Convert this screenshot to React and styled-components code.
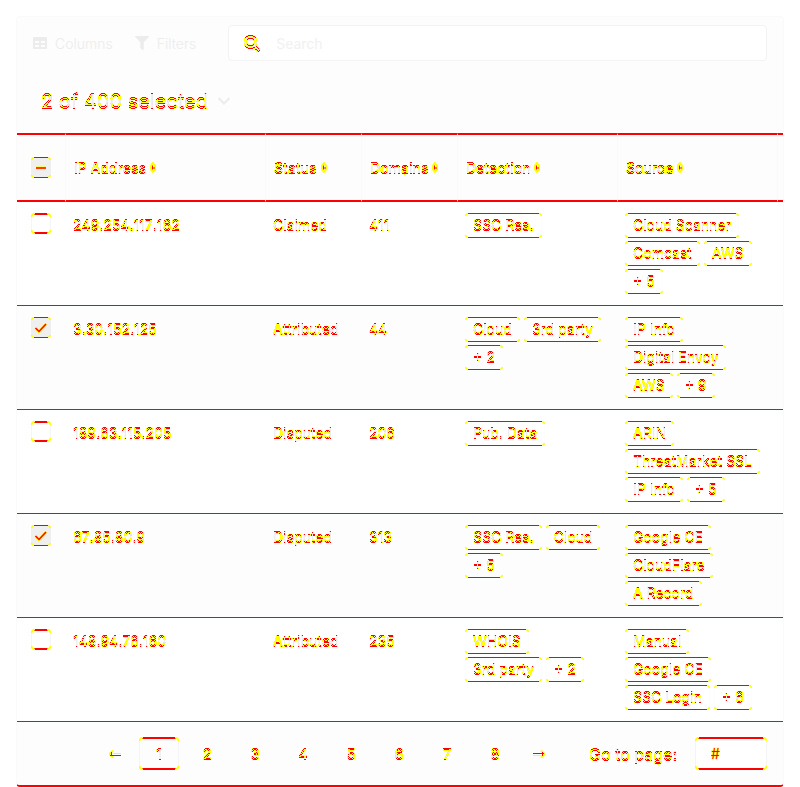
import React, { useState } from "react";
import styled, { createGlobalStyle, css } from "styled-components";
import { FaSearch, FaFilter } from "react-icons/fa";

const RED = "#ff0000";
const YELLOW = "#ffff00";
const FAINT = "#ececec";
const PALE = "#fdfdfd";
const HAIR = "#fafafa";

const GlobalStyle = createGlobalStyle`
  * { box-sizing: border-box; }
  body {
    margin: 0;
    background: #ffffff;
    color: ${RED};
    font-family: Inter, "Liberation Sans", sans-serif;
    font-size: 14px;
  }
  button, input { font: inherit; color: inherit; }
  button { background: none; border: 0; padding: 0; cursor: pointer; }
`;

/* Rounded frame: red rules above and below, yellow corners, faint sides. */
const arc = (at, pos, r) =>
  `radial-gradient(circle at ${at}, transparent ${r - 2}px, ${YELLOW} ${r - 1}px, ${YELLOW} ${r}px, transparent ${r + 1}px) ${pos} / ${r}px ${r}px no-repeat`;

const frame = ({ line = 1, side = PALE, fill = "transparent" }) => css`
  border: 0;
  border-radius: 3px;
  background:
    ${arc("100% 100%", "left top", line + 2)},
    ${arc("0% 100%", "right top", line + 2)},
    ${arc("100% 0%", "left bottom", line + 2)},
    ${arc("0% 0%", "right bottom", line + 2)},
    linear-gradient(${RED}, ${RED}) center top / calc(100% - 6px) ${line}px no-repeat,
    linear-gradient(${RED}, ${RED}) center bottom / calc(100% - 6px) ${line}px no-repeat,
    linear-gradient(${side}, ${side}) left center / 1px calc(100% - 6px) no-repeat,
    linear-gradient(${side}, ${side}) right center / 1px calc(100% - 6px) no-repeat,
    ${fill};
`;

const Defs = styled.svg`
  position: absolute;
  width: 0;
  height: 0;
`;

const Ink = styled.span`
  filter: url(#ink);
  display: inline-block;
`;

const Card = styled.main`
  margin: 16px 16px 0;
  background: ${PALE};
  border: 1px solid ${HAIR};
  border-bottom: 2px solid ${RED};
  border-radius: 4px;
`;

const Toolbar = styled.header`
  display: flex;
  align-items: center;
  gap: 22px;
  padding: 8px 16px 0;
`;

const ToolButton = styled.button`
  display: flex;
  align-items: center;
  gap: 8px;
  color: ${FAINT};
  font-weight: 300;
`;

const SearchBox = styled.label`
  flex: 1;
  display: flex;
  align-items: center;
  gap: 16px;
  height: 36px;
  margin-left: 10px;
  padding: 0 15px;
  background: #ffffff;
  border: 1px solid #f3f3f3;
  border-radius: 4px;
  svg { filter: url(#ink); flex: none; }
`;

const SearchInput = styled.input`
  flex: 1;
  min-width: 0;
  padding: 0;
  border: 0;
  outline: 0;
  background: none;
  &::placeholder { color: #f1f1f1; opacity: 1; }
`;

const Selection = styled.button`
  display: flex;
  align-items: center;
  gap: 9px;
  margin: 24px 0 16px 24px;
  font-size: 20px;
  line-height: 32px;
`;

const Table = styled.table`
  width: 100%;
  table-layout: fixed;
  border-collapse: separate;
  border-spacing: 0;
`;

const Col = styled.col`
  width: ${(p) => p.$w || "auto"};
`;

const HeadCell = styled.th`
  height: 69px;
  padding: 0 0 0 ${(p) => (p.$first ? 14 : 8)}px;
  text-align: left;
  border-top: 2px solid ${RED};
  border-bottom: 2px solid ${RED};
  border-left: ${(p) => (p.$first ? 0 : 1)}px solid #fafafa;
`;

const SortButton = styled.button`
  display: flex;
  align-items: center;
  gap: 4px;
  font-weight: 500;
`;

const Row = styled.tr`
  background: ${(p) => (p.$on ? PALE : "#ffffff")};
`;

const Cell = styled.td`
  padding: ${(p) => (p.$first ? "11px 0 0 14px" : "11px 8px")};
  vertical-align: top;
  line-height: 23px;
  font-kerning: ${(p) => (p.$plain ? "none" : "auto")};
  border-bottom: 1px solid ${RED};
`;

const Check = styled.span`
  display: grid;
  place-items: center;
  width: 20px;
  height: 21px;
  ${(p) => frame(p.$on ? { fill: "#efefef", side: "#efefef" } : { line: 2, fill: "#ffffff", side: "#f5f5f5" })}
  input {
    grid-area: 1 / 1;
    appearance: none;
    width: 20px;
    height: 20px;
    margin: 0;
  }
  svg { grid-area: 1 / 1; pointer-events: none; }
`;

const Chips = styled.div`
  display: flex;
  flex-wrap: wrap;
  gap: 3px 4px;
`;

const Chip = styled.span`
  padding: 0 8px;
  height: 25px;
  white-space: nowrap;
  ${frame({})}
`;

const Footer = styled.footer`
  display: flex;
  align-items: center;
  justify-content: flex-end;
  gap: 34px;
  padding: 15px 16px;
  font-size: 16px;
`;

const Pages = styled.nav`
  display: flex;
  gap: 8px;
`;

const PageButton = styled.button`
  display: grid;
  place-items: center;
  width: ${(p) => (p.$arrow ? 32 : 40)}px;
  height: 33px;
  font-size: 15px;
  ${(p) => p.$current && frame({ line: 2, side: "#f4f4f4" })}
`;

const GoTo = styled.label`
  display: flex;
  align-items: center;
  gap: 18px;
`;

const GoInput = styled.input`
  width: 72px;
  height: 33px;
  padding: 0 16px;
  outline: 0;
  font-size: 14px;
  ${frame({ line: 2, side: "#f4f4f4", fill: "#ffffff" })}
  &::placeholder { color: ${RED}; opacity: 1; -webkit-text-stroke: 1px ${YELLOW}; paint-order: stroke fill; }
`;

function InkFilter() {
  return (
    <Defs aria-hidden="true">
      <filter id="ink" x="-5%" y="-20%" width="110%" height="140%" colorInterpolationFilters="sRGB">
        <feOffset in="SourceAlpha" dy="1" result="down" />
        <feComposite in="SourceAlpha" in2="down" operator="arithmetic" k2="1" k3="-1" result="upper" />
        <feComposite in="down" in2="SourceAlpha" operator="arithmetic" k2="1" k3="-1" result="lower" />
        <feMerge result="edges">
          <feMergeNode in="upper" />
          <feMergeNode in="lower" />
        </feMerge>
        <feComponentTransfer in="edges" result="weak">
          <feFuncA type="discrete" tableValues="0 1 1 1 1 1 1 1 1 1" />
        </feComponentTransfer>
        <feComponentTransfer in="edges" result="strong">
          <feFuncA type="discrete" tableValues="0 0 0 0 0 1 1 1 1 1" />
        </feComponentTransfer>
        <feFlood floodColor="#ececec" />
        <feComposite in2="SourceAlpha" operator="in" result="gray" />
        <feFlood floodColor={YELLOW} />
        <feComposite in2="weak" operator="in" result="yellow" />
        <feFlood floodColor={RED} />
        <feComposite in2="strong" operator="in" result="red" />
        <feMerge>
          <feMergeNode in="gray" />
          <feMergeNode in="yellow" />
          <feMergeNode in="red" />
        </feMerge>
      </filter>
    </Defs>
  );
}

const ColumnsIcon = () => (
  <svg width="14" height="12" viewBox="0 0 14 12" fill="currentColor" aria-hidden="true">
    <path fillRule="evenodd" d="M1 0h12a1 1 0 0 1 1 1v10a1 1 0 0 1-1 1H1a1 1 0 0 1-1-1V1a1 1 0 0 1 1-1zM2 4v2h4V4zM8 4v2h4V4zM2 8v2h4V8zM8 8v2h4V8z" />
  </svg>
);

const Chevron = () => (
  <svg width="14" height="10" viewBox="0 0 14 10" fill="none" stroke={FAINT} strokeWidth="2" aria-hidden="true">
    <path d="M1.5 2 7 7.500 12.500 2" />
  </svg>
);

const SortIcon = () => (
  <svg width="6" height="11" viewBox="0 0 6 11" aria-hidden="true">
    <path d="M3 1 5 3.500v4L3 10 1 7.500v-4z" fill="#fff" stroke={YELLOW} strokeWidth="2" />
    <path d="M2 3.500v4h1v-1h2v-1H3v-2z" fill={RED} />
  </svg>
);

const Mark = ({ d }) => (
  <svg width="14" height="12" viewBox="0 0 14 12" fill="none" aria-hidden="true">
    <path d={d} stroke={YELLOW} strokeWidth="3" />
    <path d={d} stroke={RED} strokeWidth="1.500" />
  </svg>
);

const Arrow = ({ right }) => (
  <svg width="12" height="8" viewBox="0 0 12 8" fill="none" aria-hidden="true">
    {right ? (
      <>
        <path d="M8 .5 11.500 4 8 7.500" stroke={YELLOW} strokeWidth="2" />
        <path d="M0 5.500h8" stroke={YELLOW} />
        <path d="M0 3.500h11M9.500 2v4" stroke={RED} />
      </>
    ) : (
      <>
        <path d="M4 .5.5 4 4 7.500" stroke={YELLOW} strokeWidth="2" />
        <path d="M4 3.500h8" stroke={YELLOW} />
        <path d="M1 5.500h11M2.500 2v4" stroke={RED} />
      </>
    )}
  </svg>
);

const HEADS = ["IP Address", "Status", "Domains", "Detection", "Source"];

const DATA = [
  ["249.254.117.162", "Claimed", "411", ["SSC Res."], ["Cloud Scanner", "Comcast", "AWS", "+ 5"]],
  ["3.30.152.125", "Attributed", "44", ["Cloud", "3rd party", "+ 2"], ["IP Info", "Digital Envoy", "AWS", "+ 9"]],
  ["189.63.115.205", "Disputed", "206", ["Pub. Data"], ["ARIN", "ThreatMarket SSL", "IP Info", "+ 5"]],
  ["67.85.80.9", "Disputed", "313", ["SSC Res.", "Cloud", "+ 5"], ["Google CE", "CloudFlare", "A Record"]],
  ["148.94.76.160", "Attributed", "235", ["WHOIS", "3rd party", "+ 2"], ["Manual", "Google CE", "SSC Login", "+ 6"]],
];

function CheckBox({ on, mixed, label, onChange }) {
  return (
    <Check $on={on || mixed}>
      <input type="checkbox" aria-label={label} checked={on} onChange={onChange} />
      {mixed ? <Mark d="M2 6h10" /> : on ? <Mark d="M1.500 6 5 9.500 12 2" /> : null}
    </Check>
  );
}

const ChipList = ({ items }) => (
  <Chips>
    {items.map((t) => (
      <Chip key={t}>
        <Ink>{t}</Ink>
      </Chip>
    ))}
  </Chips>
);

export default function App() {
  const [picked, setPicked] = useState([1, 3]);
  const [page, setPage] = useState(1);
  const toggle = (i) => setPicked((p) => (p.includes(i) ? p.filter((n) => n !== i) : [...p, i]));
  const all = picked.length === DATA.length;

  return (
    <>
      <GlobalStyle />
      <InkFilter />
      <Card>
        <Toolbar>
          <ToolButton><ColumnsIcon />Columns</ToolButton>
          <ToolButton><FaFilter size={14} />Filters</ToolButton>
          <SearchBox>
            <FaSearch size={16} />
            <SearchInput type="search" aria-label="Search" placeholder="Search" />
          </SearchBox>
        </Toolbar>
        <Selection>
          <Ink>{picked.length} of 400 selected</Ink>
          <Chevron />
        </Selection>
        <Table>
          <colgroup>
            <Col $w="48px" /><Col /><Col $w="96px" /><Col $w="96px" /><Col $w="160px" /><Col $w="160px" /><Col $w="6px" />
          </colgroup>
          <thead>
            <tr>
              <HeadCell $first>
                <CheckBox
                  label="Select all rows"
                  on={all}
                  mixed={!all && picked.length > 0}
                  onChange={() => setPicked(all ? [] : DATA.map((_, i) => i))}
                />
              </HeadCell>
              {HEADS.map((h) => (
                <HeadCell key={h}>
                  <SortButton><Ink>{h}</Ink><SortIcon /></SortButton>
                </HeadCell>
              ))}
              <HeadCell as="td" />
            </tr>
          </thead>
          <tbody>
            {DATA.map(([ip, status, domains, detection, source], i) => (
              <Row key={ip} $on={picked.includes(i)}>
                <Cell $first>
                  <CheckBox label={`Select ${ip}`} on={picked.includes(i)} onChange={() => toggle(i)} />
                </Cell>
                <Cell $plain><Ink>{ip}</Ink></Cell>
                <Cell $plain><Ink>{status}</Ink></Cell>
                <Cell $plain><Ink>{domains}</Ink></Cell>
                <Cell><ChipList items={detection} /></Cell>
                <Cell><ChipList items={source} /></Cell>
                <Cell $first />
              </Row>
            ))}
          </tbody>
        </Table>
        <Footer>
          <Pages aria-label="Pagination">
            <PageButton $arrow aria-label="Previous page" onClick={() => setPage(Math.max(1, page - 1))}><Arrow /></PageButton>
            {[1, 2, 3, 4, 5, 6, 7, 8].map((n) => (
              <PageButton key={n} $current={n === page} onClick={() => setPage(n)}><Ink>{n}</Ink></PageButton>
            ))}
            <PageButton $arrow aria-label="Next page" onClick={() => setPage(Math.min(8, page + 1))}><Arrow right /></PageButton>
          </Pages>
          <GoTo>
            <Ink>Go to page:</Ink>
            <GoInput placeholder="#" />
          </GoTo>
        </Footer>
      </Card>
    </>
  );
}
